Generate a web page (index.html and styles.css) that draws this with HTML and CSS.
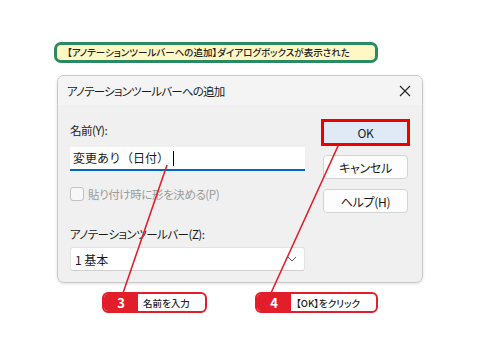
FILE: index.html
```html
<!DOCTYPE html>
<html lang="ja">
<head>
    <meta charset="UTF-8">
    <title>アノテーションツールバーへの追加</title>
    <link rel="stylesheet" href="styles.css">
</head>
<body>
    <div class="page">
        <div class="banner">【アノテーションツールバーへの追加】ダイアログボックスが表示された</div>

        <div class="dialog">
            <div class="titlebar">
                <span class="title">アノテーションツールバーへの追加</span>
                <svg class="close" width="12" height="12" viewBox="0 0 12 12">
                    <path d="M1 1 L11 11 M11 1 L1 11" stroke="#222" stroke-width="1.1" fill="none"/>
                </svg>
            </div>
            <div class="body">
                <div class="left">
                    <div class="label first">名前(Y):</div>
                    <div class="input">変更あり（日付）<span class="caret"></span></div>
                    <div class="check">
                        <span class="box"></span>
                        <span>貼り付け時に形を決める(P)</span>
                    </div>
                    <div class="label second">アノテーションツールバー(Z):</div>
                    <div class="select">
                        <span>1 基本</span>
                        <svg width="10" height="6" viewBox="0 0 10 6">
                            <path d="M1 1 L5 5 L9 1" stroke="#555" stroke-width="1" fill="none"/>
                        </svg>
                    </div>
                </div>
                <div class="right">
                    <div class="mark">
                        <div class="btn ok">OK</div>
                    </div>
                    <div class="btn cancel">キャンセル</div>
                    <div class="btn help">ヘルプ(H)</div>
                </div>
            </div>
        </div>

        <div class="steps">
            <div class="step step3"><span class="num">3</span><span class="text">名前を入力</span></div>
            <div class="step step4"><span class="num">4</span><span class="text">【OK】をクリック</span></div>
        </div>

        <!-- 引き出し線 -->
        <svg class="lines" width="480" height="360" viewBox="0 0 480 360">
            <line x1="167" y1="165" x2="123" y2="293" stroke="#e31e2b" stroke-width="1.6"/>
            <line x1="338" y1="146" x2="271" y2="293" stroke="#e31e2b" stroke-width="1.6"/>
        </svg>
    </div>
</body>
</html>
```

FILE: styles.css
```css
body {
    margin: 0;
    background: #ffffff;
    font-family: "Noto Sans CJK JP", "Noto Sans", sans-serif;
    color: #1a1a1a;
}
.page {
    position: relative;
    width: 480px;
    height: 360px;
    padding: 42px 0 0 54px;
    box-sizing: border-box;
}
.banner {
    width: 324px;
    height: 21px;
    box-sizing: border-box;
    border: 3px solid #2a8a62;
    border-radius: 7px;
    background: #fff8c4;
    padding-left: 10px;
    font-size: 9.5px;
    line-height: 15px;
    font-feature-settings: "palt";
    font-weight: 500;
    color: #222;
}
.dialog {
    margin: 12px 0 0 3px;
    width: 366px;
    height: 208px;
    box-sizing: border-box;
    border: 1px solid #c9c9c9;
    border-radius: 7px;
    background: #f0f0f0;
    box-shadow: 0 1px 3px rgba(0, 0, 0, 0.12);
    overflow: hidden;
}
.titlebar {
    height: 29px;
    background: #f4f4f4;
    display: flex;
    align-items: center;
    justify-content: space-between;
    padding: 0 11px 0 9px;
}
.title {
    font-size: 11.5px;
    letter-spacing: -0.8px;
    font-feature-settings: "palt";
}
.body {
    display: flex;
    padding-left: 12px;
}
.left {
    width: 235px;
    display: flex;
    flex-direction: column;
}
.label {
    font-size: 11.5px;
    line-height: 16px;
    letter-spacing: -0.5px;
    font-feature-settings: "palt";
}
.label.first {
    margin-top: 17px;
}
.input {
    margin-top: 9px;
    height: 24px;
    box-sizing: border-box;
    background: #ffffff;
    border-bottom: 2px solid #0067c0;
    font-size: 12px;
    line-height: 22px;
    padding-left: 3px;
    display: flex;
    align-items: center;
}
.caret {
    display: inline-block;
    width: 1px;
    height: 15px;
    background: #000;
    margin-left: 4px;
}
.check {
    margin-top: 15px;
    height: 16px;
    display: flex;
    align-items: center;
    gap: 4px;
    font-size: 11.5px;
    letter-spacing: -0.4px;
    color: #9b9b9b;
    font-feature-settings: "palt";
}
.box {
    width: 12px;
    height: 12px;
    border: 1px solid #c2c2c2;
    border-radius: 3px;
    background: #f7f7f7;
}
.label.second {
    margin-top: 24px;
}
.select {
    margin-top: 5px;
    height: 24px;
    box-sizing: border-box;
    background: #ffffff;
    border: 1px solid #e2e2e2;
    border-bottom-color: #cfcfcf;
    border-radius: 3px;
    display: flex;
    align-items: center;
    justify-content: space-between;
    padding: 0 7px 0 4px;
    font-size: 12px;
}
.right {
    margin-left: 16px;
    display: flex;
    flex-direction: column;
}
.mark {
    margin-top: 14px;
    width: 89px;
    height: 27px;
    box-sizing: border-box;
    border: 3px solid #ee0000;
}
.btn {
    box-sizing: border-box;
    height: 24px;
    width: 85px;
    background: #fdfdfd;
    border: 1px solid #d3d3d3;
    border-radius: 4px;
    font-size: 12px;
    display: flex;
    align-items: center;
    justify-content: center;
    letter-spacing: -0.3px;
    font-feature-settings: "palt";
}
.btn.ok {
    width: 83px;
    height: 21px;
    background: #dfeaf6;
    border: none;
    border-radius: 2px;
}
.btn.cancel {
    margin: 9px 0 0 2px;
}
.btn.help {
    margin: 10px 0 0 2px;
}
.steps {
    display: flex;
    margin: 9px 0 0 48px;
    gap: 48px;
}
.step {
    height: 21px;
    box-sizing: border-box;
    border: 2px solid #e31e2b;
    border-radius: 6px;
    display: flex;
    align-items: center;
    background: #ffffff;
    overflow: hidden;
}
.step3 {
    width: 105px;
}
.step4 {
    width: 123px;
}
.num {
    width: 34px;
    height: 100%;
    background: #e31e2b;
    color: #ffffff;
    font-weight: bold;
    font-size: 13px;
    display: flex;
    align-items: center;
    justify-content: center;
}
.text {
    padding-left: 5px;
    font-size: 9.5px;
    font-weight: 500;
    color: #222;
    font-feature-settings: "palt";
}
.lines {
    position: absolute;
    left: 0;
    top: 0;
    pointer-events: none;
}
```
